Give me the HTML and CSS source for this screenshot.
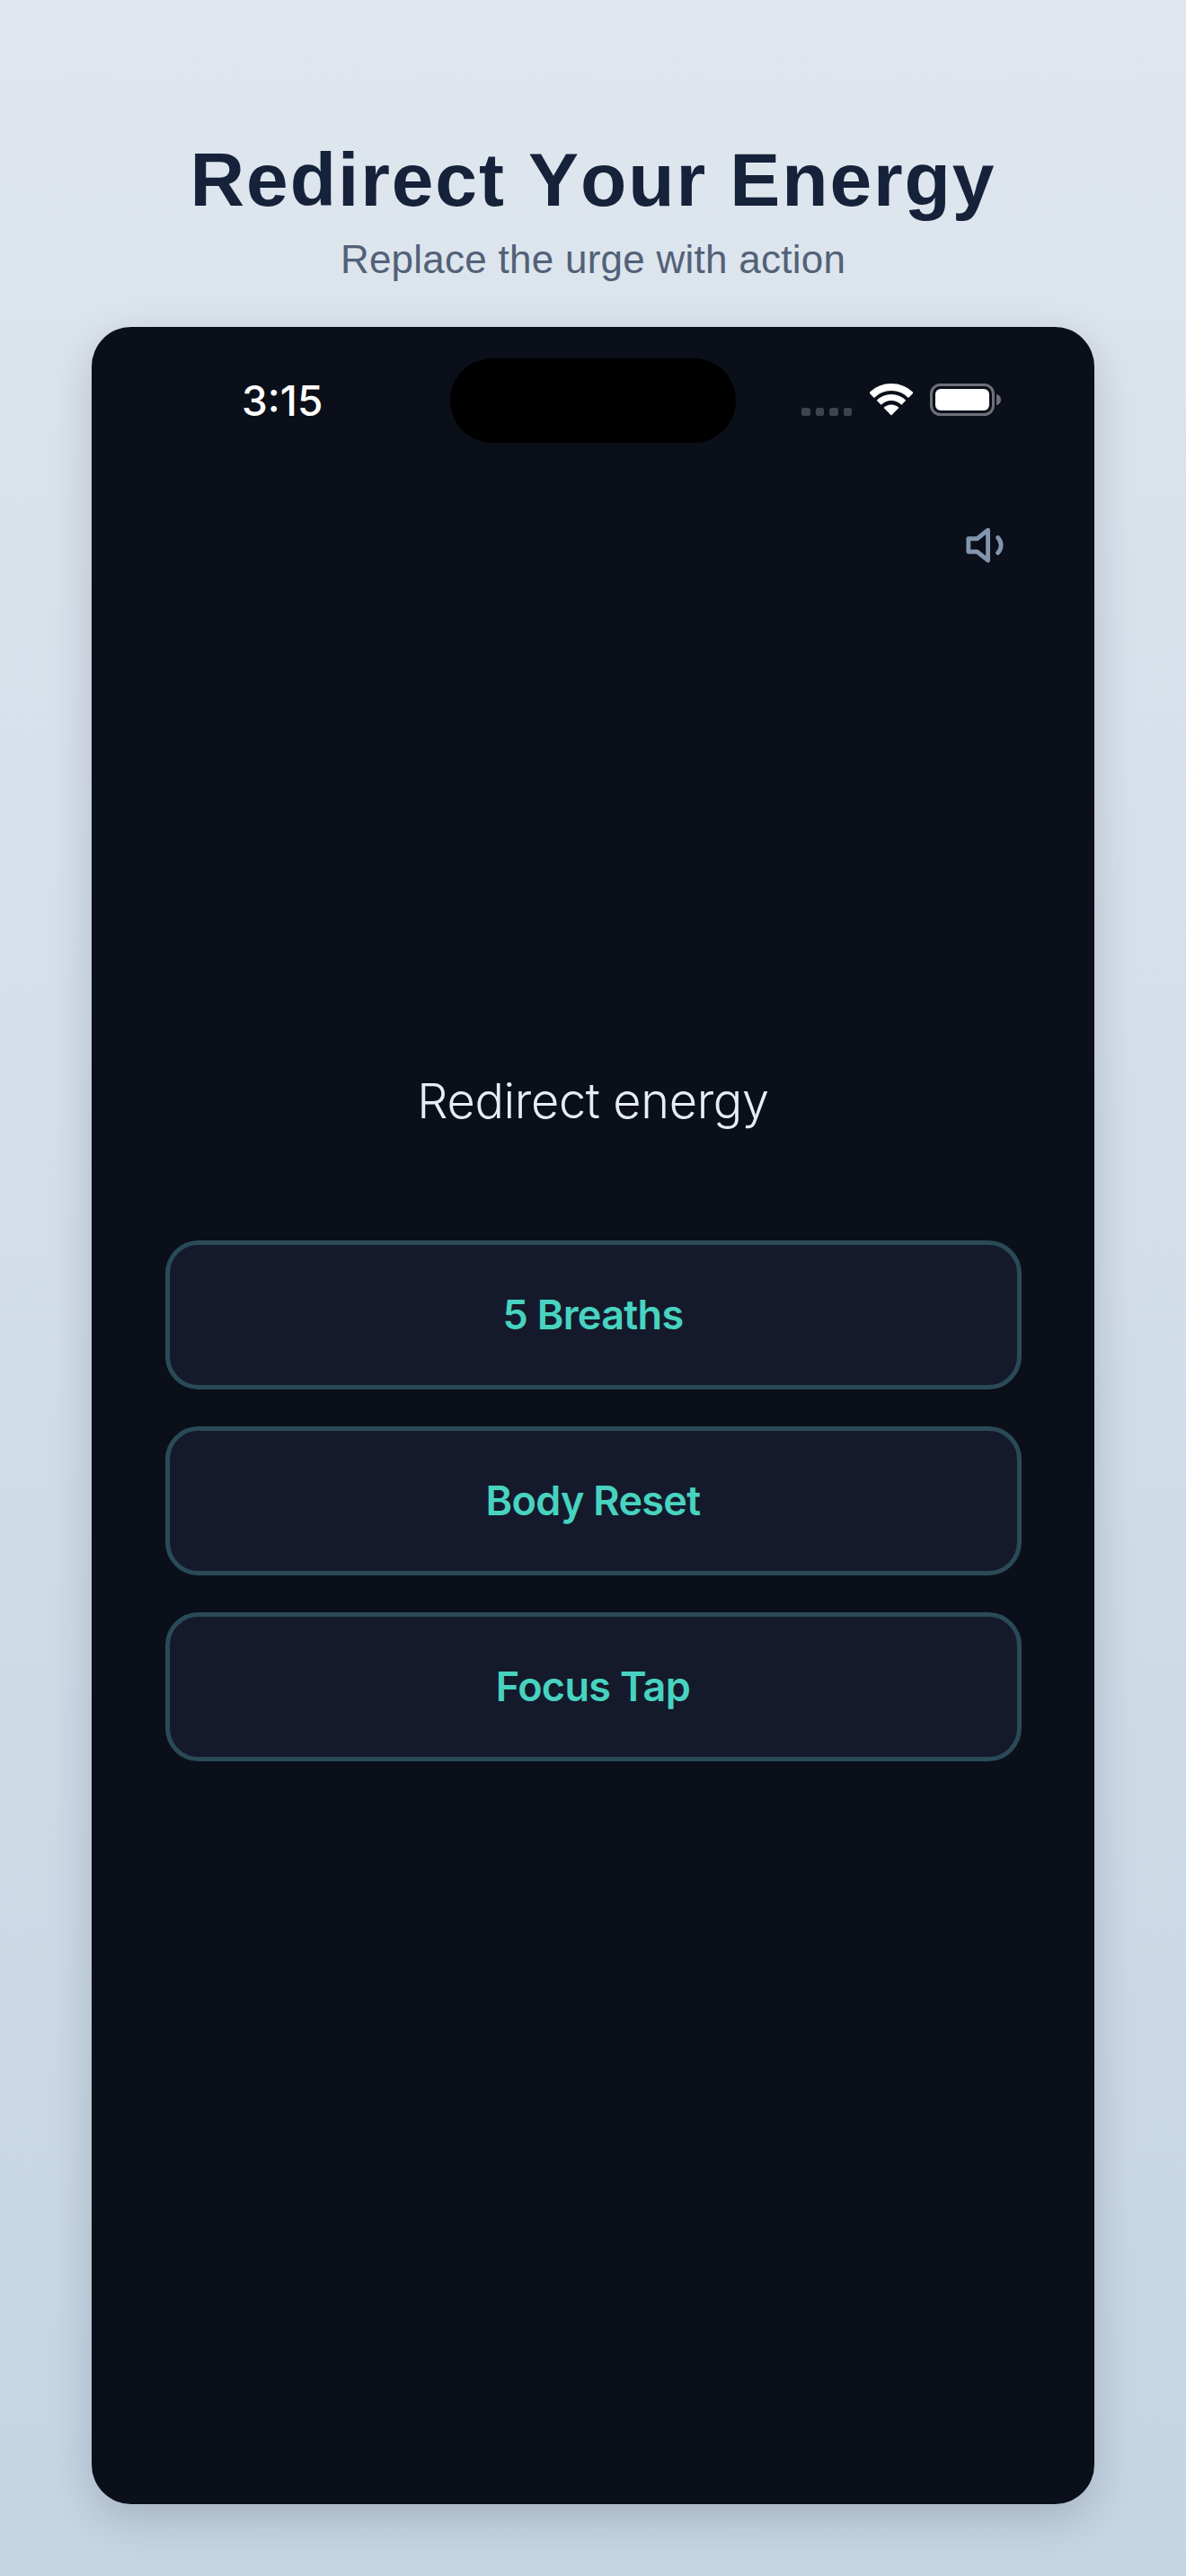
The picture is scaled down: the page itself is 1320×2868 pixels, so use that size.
FILE: index.html
```html
<!DOCTYPE html>
<html lang="en">
<head>
    <meta charset="UTF-8">
    <meta name="viewport" content="width=device-width, initial-scale=1.0">
    <title>Redirect Your Energy</title>
    <link rel="stylesheet" href="styles.css">
</head>
<body>

    <header class="page-header">
        <h1>Redirect Your Energy</h1>
        <p>Replace the urge with action</p>
    </header>

    <div class="phone">
        <div class="status-bar">
            <div class="status-left"><span class="time">3:15</span></div>
            <div class="island"></div>
            <div class="status-right">
                <div class="signal"><i></i><i></i><i></i><i></i></div>
                <svg class="wifi" viewBox="0 0 48 36" fill="none" stroke="#fff">
                    <path d="M2.1 13.1a31 31 0 0 1 43.8 0" stroke-width="8"/>
                    <path d="M10.2 21.2a19.5 19.5 0 0 1 27.6 0" stroke-width="7"/>
                    <path d="M24 35.5l-8.5-8.5a12 12 0 0 1 17 0z" fill="#fff" stroke="none"/>
                </svg>
                <svg class="battery" viewBox="0 0 79 36">
                    <rect x="1.5" y="1.5" width="69" height="33" rx="10" fill="none" stroke="#6e7079" stroke-width="3"/>
                    <rect x="6" y="6" width="60" height="24" rx="6" fill="#fff"/>
                    <path d="M74 12c3 .5 5 3 5 6s-2 5.500-5 6z" fill="#6e7079"/>
                </svg>
            </div>
        </div>

        <div class="sound-row">
            <svg class="sound" viewBox="0 0 24 24" fill="none" stroke="#8295ad" stroke-width="2" stroke-linecap="round" stroke-linejoin="round">
                <path d="M11 5 6 9H2v6h4l5 4V5z"/>
                <path d="M15.54 8.46a5 5 0 0 1 0 7.07"/>
            </svg>
        </div>

        <main class="content">
            <h2>Redirect energy</h2>
            <div class="choices">
                <button type="button">5 Breaths</button>
                <button type="button">Body Reset</button>
                <button type="button">Focus Tap</button>
            </div>
        </main>
    </div>

</body>
</html>
```

FILE: styles.css
```css
html, body {
    height: 100%;
}
body {
    box-sizing: border-box;
    margin: 0;
    padding: 152px 102px 80px;
    display: flex;
    flex-direction: column;
    background: linear-gradient(180deg, #dfe6ee 0%, #c5d5e3 100%);
    font-family: "Liberation Sans", Arial, sans-serif;
}
.page-header {
    text-align: center;
    margin-bottom: 49px;
}
.page-header h1 {
    margin: 0 0 15px;
    font-size: 84px;
    line-height: 96px;
    font-weight: 700;
    font-kerning: none;
    letter-spacing: 1.9px;
    color: #16213a;
}
.page-header p {
    margin: 0;
    font-size: 44px;
    line-height: 52px;
    letter-spacing: 0.25px;
    color: #526178;
}
.phone {
    flex: 1;
    background-color: #0a0f19;
    border-radius: 44px;
    box-shadow: 0 16px 48px rgba(15, 23, 42, 0.18);
    font-family: Inter, "Liberation Sans", sans-serif;
}
.status-bar {
    display: grid;
    grid-template-columns: 1fr auto 1fr;
    align-items: center;
    padding-top: 35px;
}
.status-left {
    padding-left: 167px;
}
.time {
    font-size: 46px;
    font-weight: 500;
    color: #fff;
}
.island {
    width: 318px;
    height: 94px;
    border-radius: 47px;
    background-color: #000;
}
.status-right {
    display: flex;
    justify-content: flex-end;
    align-items: flex-end;
    padding-right: 104px;
    height: 36px;
    margin-top: -2px;
}
.signal {
    display: flex;
    gap: 6px;
    margin-right: 20px;
}
.signal i {
    width: 9.500px;
    height: 9px;
    border-radius: 2.500px;
    background-color: #3f434e;
}
.wifi {
    width: 48px;
    height: 36px;
    margin-right: 19px;
}
.battery {
    width: 79px;
    height: 36px;
}
.sound-row {
    display: flex;
    justify-content: flex-end;
    padding: 85px 87px 0 0;
}
.sound {
    width: 58px;
    height: 58px;
}
.content {
    padding: 0 81.500px;
}
.content h2 {
    margin: 557px 0 0;
    text-align: center;
    font-size: 54px;
    line-height: 66px;
    font-weight: 300;
    letter-spacing: -0.35px;
    color: #e8edf4;
}
.choices {
    display: flex;
    flex-direction: column;
    gap: 41px;
    margin-top: 122px;
}
.choices button {
    height: 166px;
    padding: 0 0 2px;
    background-color: #141a2c;
    border: 5px solid #2a4a57;
    border-radius: 37px;
    font-family: Inter, "Liberation Sans", sans-serif;
    font-size: 45px;
    font-weight: 600;
    letter-spacing: -0.7px;
    color: #48d3c0;
}
```
